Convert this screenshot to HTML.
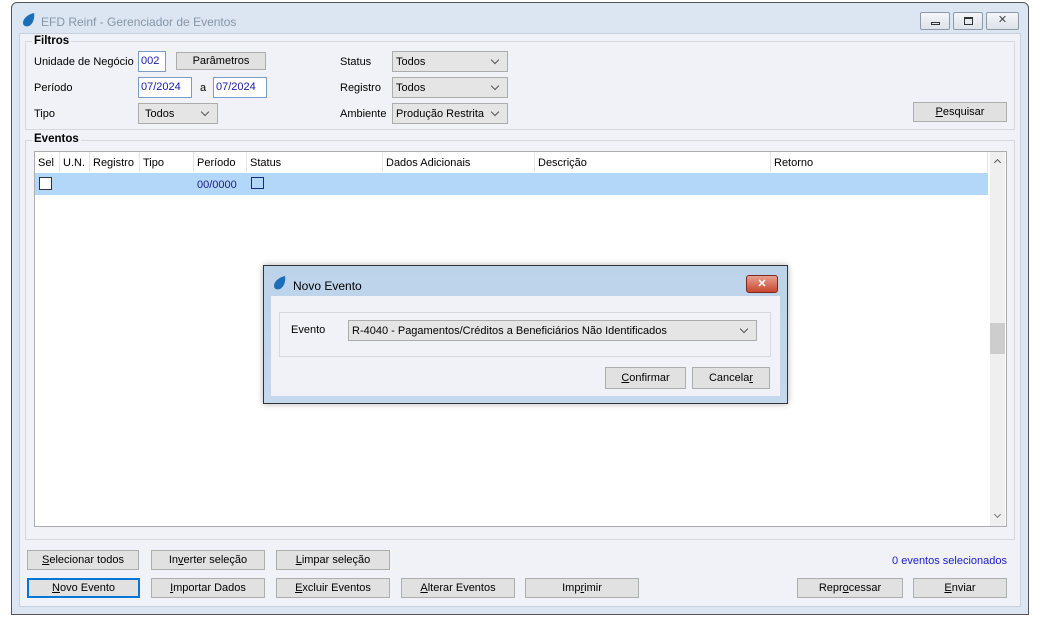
<!DOCTYPE html>
<html><head><meta charset="utf-8"><style>
*{box-sizing:border-box;margin:0;padding:0}
body{width:1037px;height:620px;background:#fff;position:relative;overflow:hidden;font-family:"Liberation Sans",sans-serif;font-size:11px;color:#000}
.a{position:absolute}
.win{left:11px;top:2px;width:1018px;height:613px;border:1px solid #555;border-radius:6px 6px 0 0;background:#dbe6f2}
.client{left:19px;top:33px;width:1002px;height:574px;background:#f1f2f7;border:1px solid #c8d2de}
.grp{border:1px solid #d6d8dd}
.gl{font-weight:bold;background:#f1f2f7;padding:0 2px;font-size:11.5px}
.btn{background:#e1e1e1;border:1px solid #adadad;text-align:center;line-height:18px;font-size:11px}
.inp{background:#fff;border:1px solid #7a9cc6;color:#1a1aa8;padding-left:2px;line-height:19px}
.sel{background:#e5e5e5;border:1px solid #acacac;padding-left:3px;line-height:20px}
.sel:after{content:"";position:absolute;right:9px;top:5px;width:5px;height:5px;border-right:1px solid #555;border-bottom:1px solid #555;transform:rotate(45deg)}
.tb{width:30px;height:18px;border:1px solid #8e9aa8;border-radius:2px;background:linear-gradient(#f4f6f9,#dde3ea)}
u{text-decoration:underline}
.hd{top:157px}
.vs{top:152px;width:1px;height:20px;background:#e5e5e5}
.t{margin-top:1px}
</style></head><body>
<div class="a win"></div>
<svg class="a" style="left:21px;top:12px" width="16" height="16" viewBox="0 0 16 16"><path d="M13 1 C8 2 2 6 2 11 C2 14 5 15 8 14 C12 12 14 6 13 1Z" fill="#1a6fb8"/></svg>
<div class="a" style="left:41px;top:15px;color:#8795a5;font-size:12px">EFD Reinf - Gerenciador de Eventos</div>
<div class="a tb" style="left:920px;top:12px"><div class="a" style="left:10px;top:9px;width:9px;height:3px;border:1px solid #333"></div></div>
<div class="a tb" style="left:953px;top:12px"><div class="a" style="left:10px;top:4px;width:9px;height:8px;border:1px solid #333;border-top-width:2px"></div></div>
<div class="a tb" style="left:986px;top:12px;width:33px;text-align:center;color:#444;line-height:15px">✕</div>
<div class="a client"></div>

<div class="a grp" style="left:25px;top:41px;width:990px;height:89px"></div>
<div class="a gl" style="left:32px;top:35px">Filtros</div>
<div class="a" style="left:34px;top:56px">Unidade de Negócio</div>
<div class="a inp" style="left:138px;top:51px;width:28px;height:21px">002</div>
<div class="a btn" style="left:176px;top:52px;width:90px;height:18px;line-height:16px">Parâmetros</div>
<div class="a" style="left:340px;top:56px">Status</div>
<div class="a sel" style="left:392px;top:51px;width:116px;height:21px">Todos</div>
<div class="a" style="left:34px;top:82px">Período</div>
<div class="a inp" style="left:138px;top:77px;width:54px;height:21px">07/2024</div>
<div class="a" style="left:200px;top:82px">a</div>
<div class="a inp" style="left:213px;top:77px;width:54px;height:21px">07/2024</div>
<div class="a" style="left:340px;top:82px">Registro</div>
<div class="a sel" style="left:392px;top:77px;width:116px;height:21px">Todos</div>
<div class="a" style="left:34px;top:108px">Tipo</div>
<div class="a sel" style="left:138px;top:103px;width:80px;height:21px;padding-left:6px">Todos</div>
<div class="a" style="left:340px;top:108px">Ambiente</div>
<div class="a sel" style="left:392px;top:103px;width:116px;height:21px">Produção Restrita</div>
<div class="a btn" style="left:913px;top:102px;width:94px;height:20px"><u>P</u>esquisar</div>

<div class="a grp" style="left:25px;top:140px;width:990px;height:400px"></div>
<div class="a gl" style="left:32px;top:133px">Eventos</div>
<div class="a" style="left:34px;top:151px;width:973px;height:376px;background:#fff;border:1px solid #adadad"></div>
<div class="a hd" style="left:38px">Sel</div><div class="a vs" style="left:59px"></div>
<div class="a hd" style="left:63px">U.N.</div><div class="a vs" style="left:89px"></div>
<div class="a hd" style="left:93px">Registro</div><div class="a vs" style="left:139px"></div>
<div class="a hd" style="left:143px">Tipo</div><div class="a vs" style="left:193px"></div>
<div class="a hd" style="left:197px">Período</div><div class="a vs" style="left:246px"></div>
<div class="a hd" style="left:250px">Status</div><div class="a vs" style="left:382px"></div>
<div class="a hd" style="left:386px">Dados Adicionais</div><div class="a vs" style="left:534px"></div>
<div class="a hd" style="left:538px">Descrição</div><div class="a vs" style="left:770px"></div>
<div class="a hd" style="left:774px">Retorno</div><div class="a vs" style="left:987px"></div>
<div class="a" style="left:35px;top:173px;width:953px;height:22px;background:#b3d7f9"></div>
<div class="a" style="left:39px;top:177px;width:13px;height:13px;background:#fff;border:1px solid #333"></div>
<div class="a" style="left:197px;top:179px;color:#1a1a8a">00/0000</div>
<div class="a" style="left:251px;top:177px;width:13px;height:12px;border:1px solid #1a2a7a"></div>
<div class="a" style="left:990px;top:152px;width:15px;height:374px;background:#efefef"></div>
<div class="a" style="left:995px;top:160px;width:5px;height:5px;border-left:1.5px solid #555;border-top:1.5px solid #555;transform:rotate(45deg)"></div>
<div class="a" style="left:995px;top:512px;width:5px;height:5px;border-right:1.5px solid #777;border-bottom:1.5px solid #777;transform:rotate(45deg)"></div>
<div class="a" style="left:990px;top:323px;width:15px;height:31px;background:#cdcdcd"></div>

<div class="a btn" style="left:27px;top:550px;width:112px;height:20px"><u>S</u>elecionar todos</div>
<div class="a btn" style="left:151px;top:550px;width:114px;height:20px">In<u>v</u>erter seleção</div>
<div class="a btn" style="left:276px;top:550px;width:114px;height:20px"><u>L</u>impar seleção</div>
<div class="a" style="right:30px;top:555px;color:#1a1ad0">0 eventos selecionados</div>
<div class="a btn" style="left:27px;top:578px;width:113px;height:20px;border:2px solid #0078d7;line-height:16px"><u>N</u>ovo Evento</div>
<div class="a btn" style="left:151px;top:578px;width:114px;height:20px"><u>I</u>mportar Dados</div>
<div class="a btn" style="left:276px;top:578px;width:114px;height:20px"><u>E</u>xcluir Eventos</div>
<div class="a btn" style="left:401px;top:578px;width:114px;height:20px"><u>A</u>lterar Eventos</div>
<div class="a btn" style="left:525px;top:578px;width:114px;height:20px">Imp<u>r</u>imir</div>
<div class="a btn" style="left:797px;top:578px;width:106px;height:20px">Repr<u>o</u>cessar</div>
<div class="a btn" style="left:913px;top:578px;width:94px;height:20px"><u>E</u>nviar</div>

<div class="a" style="left:263px;top:265px;width:525px;height:139px;border:1px solid #333;background:linear-gradient(#bcd3ea,#c4d8ee);box-shadow:0 0 6px rgba(0,0,0,.3)"></div>
<svg class="a" style="left:272px;top:275px" width="16" height="16" viewBox="0 0 16 16"><path d="M13 1 C8 2 2 6 2 11 C2 14 5 15 8 14 C12 12 14 6 13 1Z" fill="#1a6fb8"/></svg>
<div class="a" style="left:293px;top:279px;font-size:12px">Novo Evento</div>
<div class="a" style="left:746px;top:275px;width:32px;height:18px;border:1px solid #7a2a20;border-radius:3px;background:linear-gradient(#e8a090,#c84830);color:#fff;text-align:center;line-height:16px;font-weight:bold">✕</div>
<div class="a" style="left:271px;top:296px;width:509px;height:100px;background:#f1f2f7"></div>
<div class="a grp" style="left:279px;top:312px;width:492px;height:45px"></div>
<div class="a" style="left:291px;top:324px">Evento</div>
<div class="a sel" style="left:348px;top:320px;width:409px;height:21px">R-4040 - Pagamentos/Créditos a Beneficiários Não Identificados</div>
<div class="a btn" style="left:605px;top:367px;width:81px;height:22px;line-height:20px"><u>C</u>onfirmar</div>
<div class="a btn" style="left:692px;top:367px;width:78px;height:22px;line-height:20px">Cancela<u>r</u></div>
</body></html>
